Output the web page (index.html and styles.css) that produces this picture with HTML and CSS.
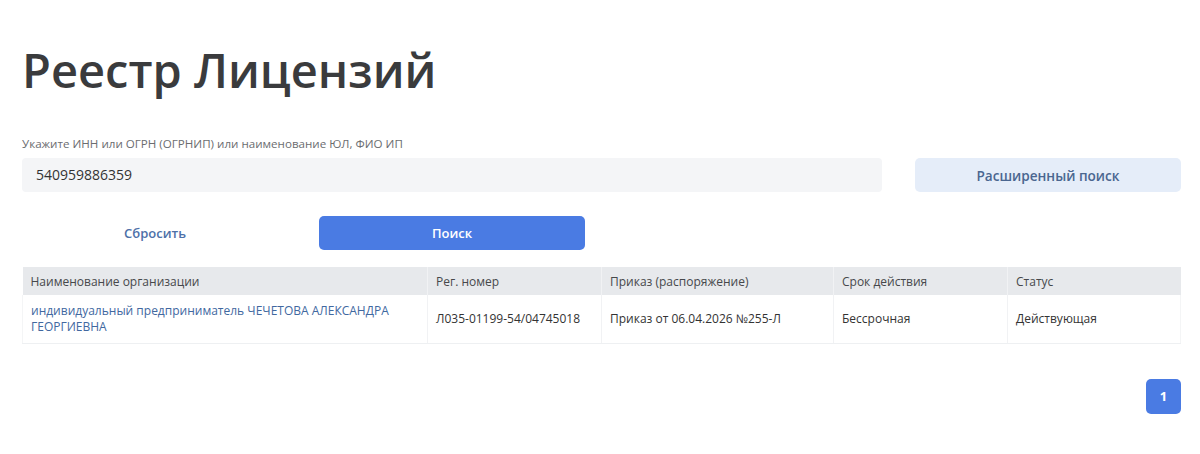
FILE: index.html
```html
<!DOCTYPE html>
<html lang="ru">
<head>
<meta charset="utf-8">
<link rel="stylesheet" href="styles.css">
</head>
<body>
<main class="page">
  <h1 class="title">Реестр Лицензий</h1>
  <label class="label">Укажите ИНН или ОГРН (ОГРНИП) или наименование ЮЛ, ФИО ИП</label>
  <div class="search-row">
    <div class="input">540959886359</div>
    <button class="btn-adv">Расширенный поиск</button>
  </div>
  <div class="actions">
    <button class="btn-reset">Сбросить</button>
    <button class="btn-search">Поиск</button>
  </div>
  <table class="grid">
    <colgroup>
      <col class="c1"><col class="c2"><col class="c3"><col class="c4"><col class="c5">
    </colgroup>
    <thead>
      <tr>
        <th>Наименование организации</th>
        <th>Рег. номер</th>
        <th>Приказ (распоряжение)</th>
        <th>Срок действия</th>
        <th>Статус</th>
      </tr>
    </thead>
    <tbody>
      <tr>
        <td><a class="org" href="#">индивидуальный предприниматель ЧЕЧЕТОВА АЛЕКСАНДРА ГЕОРГИЕВНА</a></td>
        <td>Л035-01199-54/04745018</td>
        <td>Приказ от 06.04.2026 №255-Л</td>
        <td>Бессрочная</td>
        <td>Действующая</td>
      </tr>
    </tbody>
  </table>
  <div class="pager">
    <span class="page-btn">1</span>
  </div>
</main>
</body>
</html>
```
FILE: styles.css
```css
* { box-sizing: border-box; }
html, body { margin: 0; background: #fff; }
body { font-family: "Open Sans", "Noto Sans", sans-serif; color: #333; }
.page { padding: 40px 19px 0 22px; }
.title {
  margin: 0;
  font-size: 47px;
  font-weight: 600;
  color: #3a3b3d;
  line-height: 60px;
}
.label {
  display: block;
  margin-top: 36px;
  font-size: 11.6px;
  color: #6b6d70;
  line-height: 16px;
}
.search-row {
  margin-top: 6px;
  display: grid;
  grid-template-columns: 1fr 266px;
  gap: 33px;
}
.input {
  height: 34px;
  background: #f4f5f7;
  border-radius: 4px;
  padding: 0 14px;
  font-size: 14px;
  line-height: 34px;
  color: #333;
}
.btn-adv {
  height: 34px;
  border: 0;
  border-radius: 5px;
  background: #e5edf9;
  color: #4a6690;
  font-family: inherit;
  font-size: 13.6px;
  font-weight: 600;
}
.actions {
  margin-top: 24px;
  display: flex;
  gap: 31px;
}
.actions button {
  width: 266px;
  height: 34px;
  border: 0;
  border-radius: 5px;
  font-family: inherit;
  font-size: 13px;
  font-weight: 600;
}
.btn-reset { background: transparent; color: #4d70a8; }
.btn-search { background: #4a7be3; color: #fff; }
.grid {
  margin-top: 17px;
  width: 100%;
  border-collapse: collapse;
  table-layout: fixed;
  font-size: 12px;
}
.c1 { width: 405px; }
.c2 { width: 174px; }
.c3 { width: 232px; }
.c4 { width: 174px; }
.grid th {
  background: #e7e9ec;
  height: 28px;
  text-align: left;
  font-weight: 400;
  color: #46484b;
  padding: 0 8px;
  border-right: 1px solid #f1f2f4;
}
.grid th:last-child { border-right: 0; }
.grid td {
  height: 48px;
  padding: 0 8px;
  color: #333;
  border-right: 1px solid #f1f2f4;
  border-bottom: 1px solid #eef0f2;
  line-height: 16px;
}
.grid td:first-child { border-left: 1px solid #f4f5f6; }
.grid td:last-child { border-right: 1px solid #f4f5f6; }
.org { color: #41689f; text-decoration: none; }
.pager {
  margin-top: 35px;
  display: flex;
  justify-content: flex-end;
}
.page-btn {
  width: 35px;
  height: 35px;
  border-radius: 5px;
  background: #4a7be3;
  color: #fff;
  font-size: 13px;
  font-weight: 700;
  display: flex;
  align-items: center;
  justify-content: center;
}
```
